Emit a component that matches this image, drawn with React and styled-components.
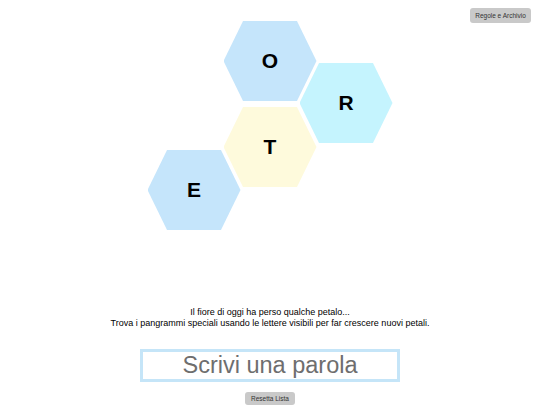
import styled, { createGlobalStyle } from "styled-components";

const GlobalStyle = createGlobalStyle`
    html, body {
        margin: 0;
        padding: 0;
        background: #ffffff;
        font-family: "Liberation Sans", Arial, sans-serif;
    }
`

const columns = [
    { offset: 129, cells: [{ letter: 'E', color: '#c5e5fb' }] },
    { offset: 0, cells: [{ letter: 'O', color: '#c5e5fb' }, { letter: 'T', color: '#fefadc' }] },
    { offset: 42, cells: [{ letter: 'R', color: '#c5f4fe' }] },
]

function App() {
    return (
        <Page>
            <GlobalStyle />
            <CornerButton>Regole e Archivio</CornerButton>

            <Board>
                {columns.map((col, i) => (
                    <Column key={i} $offset={col.offset}>
                        {col.cells.map(cell => (
                            <Hex key={cell.letter} $color={cell.color}>{cell.letter}</Hex>
                        ))}
                    </Column>
                ))}
            </Board>

            <Message>
                Il fiore di oggi ha perso qualche petalo...<br />
                Trova i pangrammi speciali usando le lettere visibili per far crescere nuovi petali.
            </Message>

            <WordInput placeholder="Scrivi una parola" />

            <SmallButton>Resetta Lista</SmallButton>
        </Page>
    )
}

export default App

const Page = styled.div`
    position: relative;
    width: 540px;
    height: 405px;
    overflow: hidden;
    display: flex;
    flex-direction: column;
    align-items: center;
`

const CornerButton = styled.button`
    position: absolute;
    top: 8px;
    right: 9px;
    width: 61px;
    height: 15px;
    padding: 0;
    border: 0;
    border-radius: 3px;
    background-color: #c9c9c9;
    color: #333;
    font-family: "Liberation Sans", Arial, sans-serif;
    font-size: 6.5px;
    cursor: pointer;
`

const Board = styled.div`
    display: flex;
    justify-content: center;
    padding-top: 21px;
    height: 210px;
`

const Column = styled.div`
    display: flex;
    flex-direction: column;
    gap: 6px;
    margin-top: ${props => props.$offset}px;

    & + & {
        margin-left: -17px;
    }
`

const Hex = styled.div`
    width: 93px;
    height: 80px;
    display: flex;
    justify-content: center;
    align-items: center;
    background-color: ${props => props.$color};
    clip-path: polygon(21% 0, 79% 0, 100% 50%, 79% 100%, 21% 100%, 0 50%);
    font-size: 21px;
    font-weight: 700;
    color: #000;
`

const Message = styled.p`
    margin: 77px 0 0;
    font-size: 9px;
    line-height: 11px;
    color: #000;
    text-align: center;
`

const WordInput = styled.input`
    box-sizing: border-box;
    margin-top: 20px;
    width: 260px;
    height: 33px;
    border: 3px solid #c5e5f8;
    outline: 0;
    padding: 0;
    text-align: center;
    font-family: "Liberation Sans", Arial, sans-serif;
    font-size: 23.5px;
    color: #333;

    &::placeholder {
        color: #6e6e6e;
    }
`

const SmallButton = styled.button`
    margin-top: 10px;
    width: 50px;
    height: 15px;
    padding: 0;
    border: 0;
    border-radius: 3px;
    background-color: #c9c9c9;
    color: #333;
    font-family: "Liberation Sans", Arial, sans-serif;
    font-size: 6.5px;
    cursor: pointer;
`
